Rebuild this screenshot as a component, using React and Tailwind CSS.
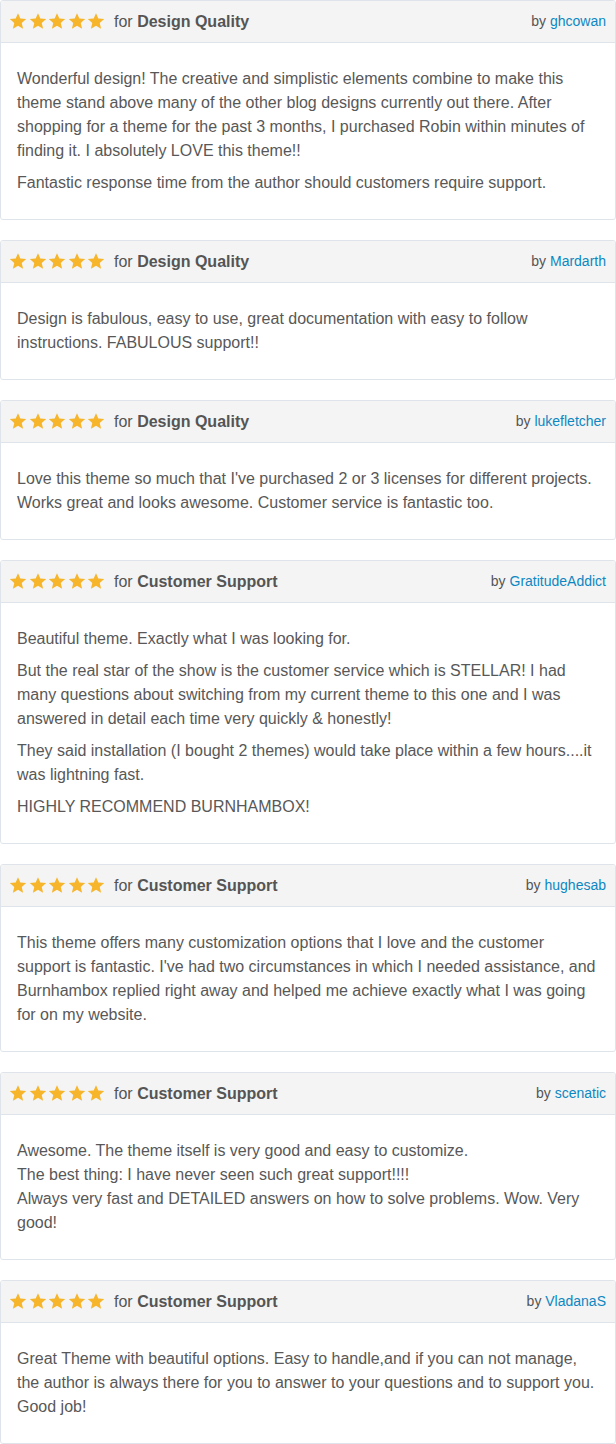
import React from "react";

const REVIEWS = [
  {
    category: "Design Quality",
    author: "ghcowan",
    paragraphs: [
      "Wonderful design! The creative and simplistic elements combine to make this theme stand above many of the other blog designs currently out there. After shopping for a theme for the past 3 months, I purchased Robin within minutes of finding it. I absolutely LOVE this theme!!",
      "Fantastic response time from the author should customers require support.",
    ],
  },
  {
    category: "Design Quality",
    author: "Mardarth",
    paragraphs: [
      "Design is fabulous, easy to use, great documentation with easy to follow instructions. FABULOUS support!!",
    ],
  },
  {
    category: "Design Quality",
    author: "lukefletcher",
    paragraphs: [
      "Love this theme so much that I've purchased 2 or 3 licenses for different projects. Works great and looks awesome. Customer service is fantastic too.",
    ],
  },
  {
    category: "Customer Support",
    author: "GratitudeAddict",
    paragraphs: [
      "Beautiful theme. Exactly what I was looking for.",
      "But the real star of the show is the customer service which is STELLAR! I had many questions about switching from my current theme to this one and I was answered in detail each time very quickly & honestly!",
      "They said installation (I bought 2 themes) would take place within a few hours....it was lightning fast.",
      "HIGHLY RECOMMEND BURNHAMBOX!",
    ],
  },
  {
    category: "Customer Support",
    author: "hughesab",
    paragraphs: [
      "This theme offers many customization options that I love and the customer support is fantastic. I've had two circumstances in which I needed assistance, and Burnhambox replied right away and helped me achieve exactly what I was going for on my website.",
    ],
  },
  {
    category: "Customer Support",
    author: "scenatic",
    paragraphs: [
      "Awesome. The theme itself is very good and easy to customize.\nThe best thing: I have never seen such great support!!!!\nAlways very fast and DETAILED answers on how to solve problems. Wow. Very good!",
    ],
  },
  {
    category: "Customer Support",
    author: "VladanaS",
    paragraphs: [
      "Great Theme with beautiful options. Easy to handle,and if you can not manage, the author is always there for you to answer to your questions and to support you. Good job!",
    ],
  },
];

const Star = () => (
  <svg viewBox="0 0 24 24" className="w-[18px] h-[18px] shrink-0" fill="#f6b52a">
    <path d="M12 1.5l3.1 7.2 7.8.7-5.9 5.2 1.8 7.7L12 18.2l-6.8 4.1 1.8-7.7-5.9-5.2 7.8-.7z" />
  </svg>
);

const ReviewCard = ({ review }) => (
  <div className="border border-[#dfe4ea] rounded-[3px] bg-white">
    {/* header */}
    <div className="h-[42px] flex items-center justify-between pl-[8px] pr-[9px] bg-[#f4f4f4] border-b border-[#dfe4ea] rounded-t-[3px]">
      <div className="flex items-center">
        <div className="flex items-center gap-[1.5px] mb-[1px]">
          {[...Array(5)].map((_, i) => (
            <Star key={i} />
          ))}
        </div>
        <span className="ml-[9px] text-[16px] text-[#555]">
          for <b className="font-bold">{review.category}</b>
        </span>
      </div>
      <span className="text-[14px] text-[#555]">
        by <a className="text-[#0d87c2]">{review.author}</a>
      </span>
    </div>
    {/* body */}
    <div className="px-[16px] pt-[24px] pb-[24px] text-[16px] leading-[24px] text-[#585858] flex flex-col gap-[8px]">
      {review.paragraphs.map((p, i) => (
        <p key={i} className="whitespace-pre-line">
          {p}
        </p>
      ))}
    </div>
  </div>
);

export default function App() {
  return (
    <div className="bg-white w-[616px] flex flex-col gap-[20px] font-['Liberation_Sans',Arial,sans-serif]">
      {REVIEWS.map((r, i) => (
        <ReviewCard key={i} review={r} />
      ))}
    </div>
  );
}
